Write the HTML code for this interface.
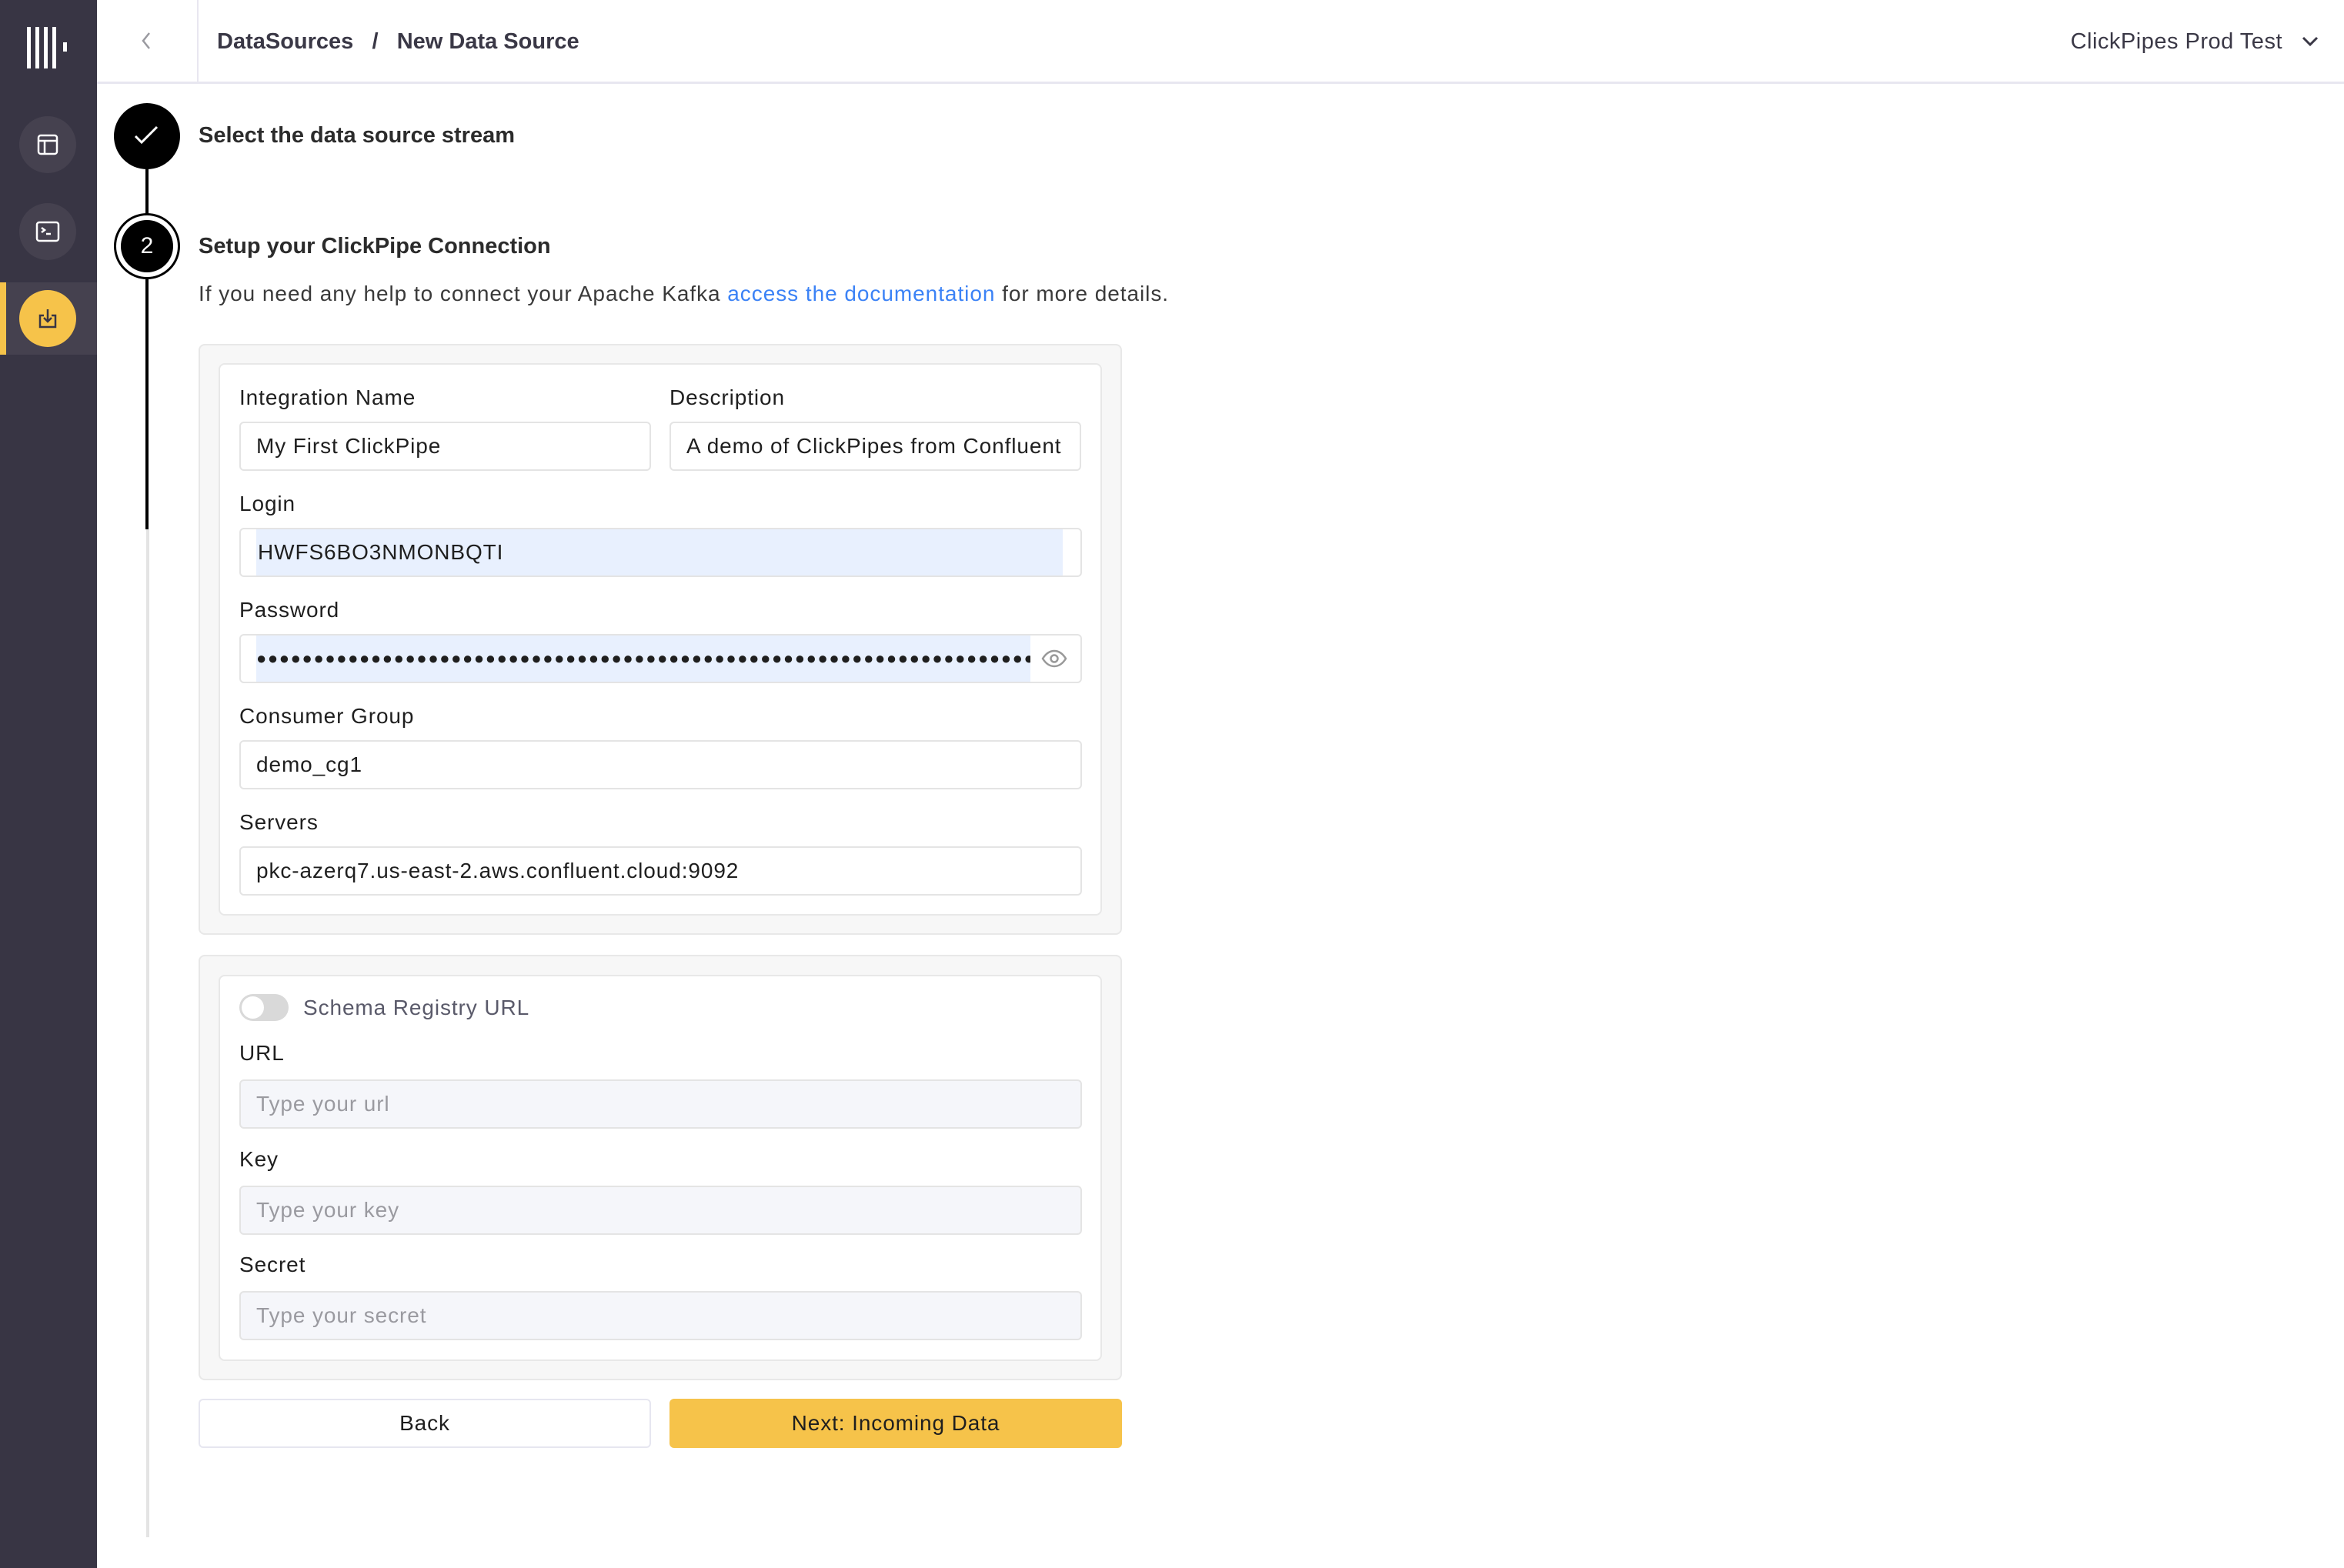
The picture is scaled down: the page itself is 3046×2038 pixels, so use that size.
<!DOCTYPE html>
<html><head><meta charset="utf-8"><style>
*{box-sizing:border-box;margin:0;padding:0}
body{width:3046px;height:2038px;background:#fff;font-family:"Liberation Sans",sans-serif;color:#1f1f1f;position:relative;overflow:hidden}
.abs{position:absolute}
#side{left:0;top:0;width:126px;height:2038px;background:#383544}
.ic{position:absolute;left:25px;width:74px;height:74px;border-radius:50%;background:#45414f;display:flex;align-items:center;justify-content:center}
#hdr{left:126px;top:0;right:0;height:109px;border-bottom:3px solid #e8e7f0}
.t{position:absolute;white-space:nowrap}
.lbl{font-size:28px;color:#1f1f1f;letter-spacing:0.9px}
.inp{position:absolute;height:64px;border:2px solid #e4e4e4;border-radius:6px;background:#fff;font-size:28px;line-height:60px;padding-left:20px;white-space:nowrap;overflow:hidden;letter-spacing:0.9px}
.ph{background:#f5f6fa;color:#9a9aa0}
.card{position:absolute;border:2px solid #e8e8e8;border-radius:8px;background:#f7f7f7}
.inner{position:absolute;border:2px solid #e8e8e8;border-radius:8px;background:#fff}
</style></head><body>
<div id="side" class="abs">
  <svg class="abs" style="left:35px;top:35px" width="56" height="54" viewBox="0 0 56 54"><g fill="#fff"><rect x="0" y="0" width="5" height="54"/><rect x="11" y="0" width="5" height="54"/><rect x="22" y="0" width="5" height="54"/><rect x="33" y="0" width="5" height="54"/><rect x="47" y="20" width="5" height="12"/></g></svg>
  <div class="ic" style="top:151px"><svg width="30" height="30" viewBox="0 0 30 30" fill="none" stroke="#fff" stroke-width="2.5"><rect x="3" y="3" width="24" height="24" rx="3"/><line x1="3" y1="10" x2="27" y2="10"/><line x1="11" y1="10" x2="11" y2="27"/></svg></div>
  <div class="ic" style="top:264px"><svg width="32" height="28" viewBox="0 0 32 28" fill="none" stroke="#fff" stroke-width="2.5"><rect x="2" y="2" width="28" height="24" rx="3"/><polyline points="8,9 12,12 8,15"/><line x1="14" y1="17" x2="20" y2="17"/></svg></div>
  <div class="abs" style="left:0;top:367px;width:126px;height:94px;background:#45414f"></div>
  <div class="abs" style="left:0;top:367px;width:8px;height:94px;background:#f6c34a"></div>
  <div class="ic" style="top:377px;background:#f6c34a"><svg width="30" height="30" viewBox="0 0 30 30" fill="none" stroke="#383544" stroke-width="2.5"><path d="M10 11H5v15h20V11h-5"/><line x1="15" y1="3" x2="15" y2="19"/><polyline points="10,14 15,19 20,14"/></svg></div>
</div>
<div id="hdr" class="abs">
  <svg class="abs" style="left:56px;top:40px" width="16" height="26" viewBox="0 0 16 26" fill="none" stroke="#9a9aa0" stroke-width="2.5"><polyline points="12,3 4,13 12,23"/></svg>
  <div class="abs" style="left:130px;top:0;width:2px;height:107px;background:#e8e7f0"></div>
  <div class="t" style="left:156px;top:38px;font-size:29px;font-weight:bold;color:#3a3846">DataSources &nbsp;&nbsp;/&nbsp;&nbsp; New Data Source</div>
  <div class="t" style="right:80px;top:38px;font-size:29px;color:#3a3846;letter-spacing:0.5px">ClickPipes Prod Test</div>
  <svg class="abs" style="right:32px;top:46px" width="24" height="16" viewBox="0 0 24 16" fill="none" stroke="#3a3846" stroke-width="3"><polyline points="3,3 12,12 21,3"/></svg>
</div>
<!-- stepper -->
<div class="abs" style="left:189px;top:218px;width:4px;height:470px;background:#000"></div>
<div class="abs" style="left:190px;top:688px;width:4px;height:1310px;background:#e4e4e4"></div>
<div class="abs" style="left:148px;top:134px;width:86px;height:86px;border-radius:50%;background:#000"></div>
<svg class="abs" style="left:171px;top:161px" width="40" height="30" viewBox="0 0 40 30" fill="none" stroke="#fff" stroke-width="3"><polyline points="5,16 13,24 33,4"/></svg>
<div class="abs" style="left:148px;top:277px;width:86px;height:86px;border-radius:50%;border:3px solid #000;background:#fff"></div>
<div class="abs" style="left:157px;top:286px;width:68px;height:68px;border-radius:50%;background:#000;color:#fff;font-size:30px;text-align:center;line-height:68px">2</div>
<div class="t" style="left:258px;top:160px;font-size:29px;font-weight:bold;color:#2b2b2b">Select the data source stream</div>
<div class="t" style="left:258px;top:304px;font-size:29px;font-weight:bold;color:#2b2b2b">Setup your ClickPipe Connection</div>
<div class="t" style="left:258px;top:366px;font-size:28px;color:#3a3a3a;letter-spacing:0.95px">If you need any help to connect your Apache Kafka <span style="color:#3b82f6">access the documentation</span> for more details.</div>
<!-- card 1 -->
<div class="card" style="left:258px;top:447px;width:1200px;height:768px"></div>
<div class="inner" style="left:284px;top:472px;width:1148px;height:718px"></div>
<div class="t lbl" style="left:311px;top:501px">Integration Name</div>
<div class="t lbl" style="left:870px;top:501px">Description</div>
<div class="inp" style="left:311px;top:548px;width:535px">My First ClickPipe</div>
<div class="inp" style="left:870px;top:548px;width:535px">A demo of ClickPipes from Confluent</div>
<div class="t lbl" style="left:311px;top:639px">Login</div>
<div class="inp" style="left:311px;top:686px;width:1095px;padding:0"><div style="position:absolute;left:20px;top:0;width:1048px;height:60px;background:#e8f0fe;padding-left:2px">HWFS6BO3NMONBQTI</div></div>
<div class="t lbl" style="left:311px;top:777px">Password</div>
<div class="inp" style="left:311px;top:824px;width:1095px;padding:0"><div style="position:absolute;left:20px;top:0;width:1006px;height:60px;background:#e8f0fe;overflow:hidden;font-size:22px;letter-spacing:1.6px">●●●●●●●●●●●●●●●●●●●●●●●●●●●●●●●●●●●●●●●●●●●●●●●●●●●●●●●●●●●●●●●●●●●●</div>
<svg style="position:absolute;left:1040px;top:18px" width="34" height="24" viewBox="0 0 34 24" fill="none" stroke="#999" stroke-width="2.5"><path d="M2 12C7 4 12 2 17 2s10 2 15 10c-5 8-10 10-15 10S7 20 2 12z"/><circle cx="17" cy="12" r="4.5"/></svg></div>
<div class="t lbl" style="left:311px;top:915px">Consumer Group</div>
<div class="inp" style="left:311px;top:962px;width:1095px">demo_cg1</div>
<div class="t lbl" style="left:311px;top:1053px">Servers</div>
<div class="inp" style="left:311px;top:1100px;width:1095px">pkc-azerq7.us-east-2.aws.confluent.cloud:9092</div>
<!-- card 2 -->
<div class="card" style="left:258px;top:1241px;width:1200px;height:553px"></div>
<div class="inner" style="left:284px;top:1267px;width:1148px;height:502px"></div>
<div class="abs" style="left:311px;top:1292px;width:64px;height:35px;border-radius:18px;background:#d9d9d9"></div>
<div class="abs" style="left:314px;top:1295px;width:29px;height:29px;border-radius:50%;background:#fff"></div>
<div class="t" style="left:394px;top:1294px;font-size:28px;color:#5a5a6a;letter-spacing:0.9px">Schema Registry URL</div>
<div class="t lbl" style="left:311px;top:1353px">URL</div>
<div class="inp ph" style="left:311px;top:1403px;width:1095px">Type your url</div>
<div class="t lbl" style="left:311px;top:1491px">Key</div>
<div class="inp ph" style="left:311px;top:1541px;width:1095px">Type your key</div>
<div class="t lbl" style="left:311px;top:1628px">Secret</div>
<div class="inp ph" style="left:311px;top:1678px;width:1095px">Type your secret</div>
<!-- buttons -->
<div class="abs" style="left:258px;top:1818px;width:588px;height:64px;border:2px solid #e6e6f0;border-radius:6px;background:#fff;font-size:28px;text-align:center;line-height:60px;letter-spacing:0.9px">Back</div>
<div class="abs" style="left:870px;top:1818px;width:588px;height:64px;border-radius:6px;background:#f6c34a;font-size:28px;text-align:center;line-height:64px;letter-spacing:0.9px">Next: Incoming Data</div>
</body></html>
